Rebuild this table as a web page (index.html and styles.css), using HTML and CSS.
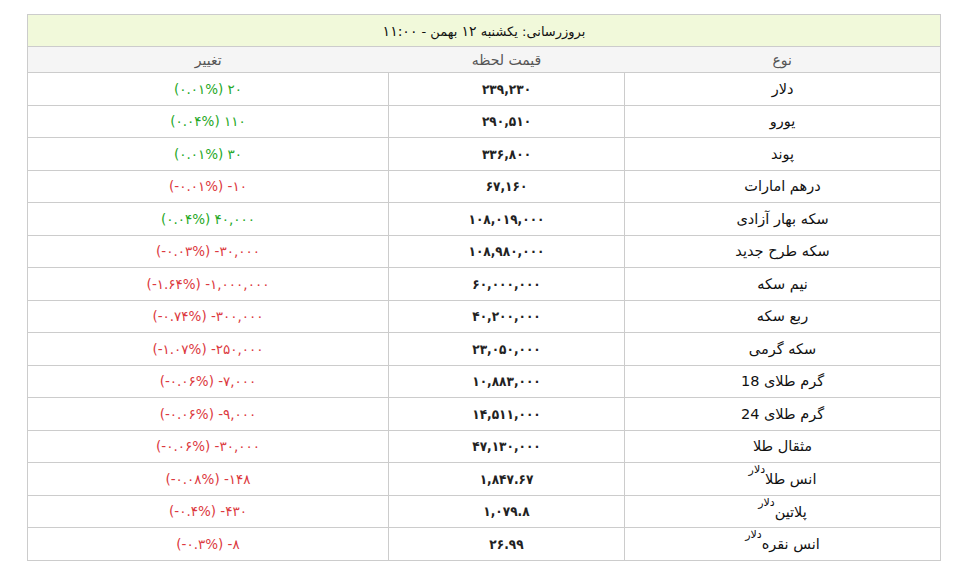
FILE: index.html
```html
<!DOCTYPE html>
<html lang="fa" dir="rtl">
<head>
<meta charset="utf-8">
<title>قیمت طلا و ارز</title>
<link rel="stylesheet" href="styles.css">
</head>
<body>
<div class="wrap">
<table class="prices">
  <colgroup>
    <col class="c-name">
    <col class="c-price">
    <col class="c-change">
  </colgroup>
  <thead>
    <tr class="title"><th colspan="3">بروزرسانی: یکشنبه <span class="d">۱۲</span> بهمن - <span class="d">۱۱:۰۰</span></th></tr>
    <tr class="head"><th>نوع</th><th>قیمت لحظه</th><th>تغییر</th></tr>
  </thead>
  <tbody>
    <tr><td class="name">دلار</td><td class="num">۲۳۹,۲۳۰</td><td class="chg up" dir="ltr">(۰.۰۱%) ۲۰</td></tr>
    <tr><td class="name">یورو</td><td class="num">۲۹۰,۵۱۰</td><td class="chg up" dir="ltr">(۰.۰۴%) ۱۱۰</td></tr>
    <tr><td class="name">پوند</td><td class="num">۳۳۶,۸۰۰</td><td class="chg up" dir="ltr">(۰.۰۱%) ۳۰</td></tr>
    <tr><td class="name">درهم امارات</td><td class="num">۶۷,۱۶۰</td><td class="chg down" dir="ltr">(-۰.۰۱%) -۱۰</td></tr>
    <tr><td class="name">سکه بهار آزادی</td><td class="num">۱۰۸,۰۱۹,۰۰۰</td><td class="chg up" dir="ltr">(۰.۰۴%) ۴۰,۰۰۰</td></tr>
    <tr><td class="name">سکه طرح جدید</td><td class="num">۱۰۸,۹۸۰,۰۰۰</td><td class="chg down" dir="ltr">(-۰.۰۳%) -۳۰,۰۰۰</td></tr>
    <tr><td class="name">نیم سکه</td><td class="num">۶۰,۰۰۰,۰۰۰</td><td class="chg down" dir="ltr">(-۱.۶۴%) -۱,۰۰۰,۰۰۰</td></tr>
    <tr><td class="name">ربع سکه</td><td class="num">۴۰,۲۰۰,۰۰۰</td><td class="chg down" dir="ltr">(-۰.۷۴%) -۳۰۰,۰۰۰</td></tr>
    <tr><td class="name">سکه گرمی</td><td class="num">۲۳,۰۵۰,۰۰۰</td><td class="chg down" dir="ltr">(-۱.۰۷%) -۲۵۰,۰۰۰</td></tr>
    <tr><td class="name">گرم طلای 18</td><td class="num">۱۰,۸۸۳,۰۰۰</td><td class="chg down" dir="ltr">(-۰.۰۶%) -۷,۰۰۰</td></tr>
    <tr><td class="name">گرم طلای 24</td><td class="num">۱۴,۵۱۱,۰۰۰</td><td class="chg down" dir="ltr">(-۰.۰۶%) -۹,۰۰۰</td></tr>
    <tr><td class="name">مثقال طلا</td><td class="num">۴۷,۱۳۰,۰۰۰</td><td class="chg down" dir="ltr">(-۰.۰۶%) -۳۰,۰۰۰</td></tr>
    <tr><td class="name">انس طلا&zwnj;<sup>&zwnj;دلار</sup></td><td class="num">۱,۸۴۷.۶۷</td><td class="chg down" dir="ltr">(-۰.۰۸%) -۱۴۸</td></tr>
    <tr><td class="name">پلاتین&zwnj;<sup>&zwnj;دلار</sup></td><td class="num">۱,۰۷۹.۸</td><td class="chg down" dir="ltr">(-۰.۴%) -۴۳۰</td></tr>
    <tr><td class="name">انس نقره&zwnj;<sup>&zwnj;دلار</sup></td><td class="num">۲۶.۹۹</td><td class="chg down" dir="ltr">(-۰.۳%) -۸</td></tr>
  </tbody>
</table>
</div>
</body>
</html>
```
FILE: styles.css
```css
html, body {
  margin: 0;
  padding: 0;
  background: #ffffff;
}
body {
  font-family: "DejaVu Sans", sans-serif;
  color: #111;
}
.wrap {
  padding: 14px 0 0 27px;
  direction: ltr;
}
.prices {
  direction: rtl;
  width: 913px;
  border-collapse: collapse;
  table-layout: fixed;
  border: 1px solid #cccccc;
}
.c-name { width: 316px; }
.c-price { width: 236px; }
.c-change { width: 361px; }

.prices th, .prices td {
  text-align: center;
  vertical-align: middle;
  padding: 0;
}
.title th {
  height: 31px;
  background: #f1f9da;
  border-bottom: 1px solid #cccccc;
  font-weight: normal;
  font-size: 13px;
  color: #111;
}
.title .d {
  font-size: 14px;
}
.head th {
  height: 25px;
  background: #f5f5f5;
  font-weight: normal;
  font-size: 14px;
  color: #555;
  border-bottom: 1px solid #cccccc;
}
.prices tbody td {
  height: 31.5px;
  border: 1px solid #cccccc;
}
.name {
  font-size: 14.5px;
  color: #111;
}
.name sup {
  font-size: 11px;
  line-height: 0;
  vertical-align: 11px;
}
.num {
  font-family: "DejaVu Sans Condensed", "DejaVu Sans", sans-serif;
  font-size: 13.5px;
  font-weight: bold;
  color: #222;
}
.chg {
  font-size: 13.5px;
}
.up { color: #26a826; }
.down { color: #dc3940; }
```
